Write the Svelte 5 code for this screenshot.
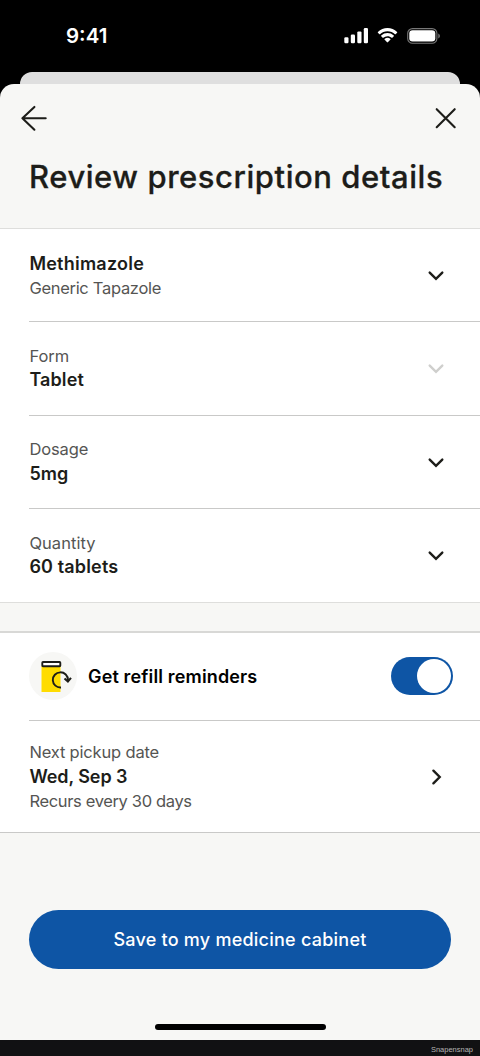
<script>
  const fields = [
    { top: 'Methimazole', bottom: 'Generic Tapazole', titleFirst: true, topSpacing: 0.23, bottomSpacing: -0.3 },
    { top: 'Form', bottom: 'Tablet', disabled: true, topSpacing: 0, bottomSpacing: 0.1 },
    { top: 'Dosage', bottom: '5mg', topSpacing: -0.1, bottomSpacing: 0.1 },
    { top: 'Quantity', bottom: '60 tablets', topSpacing: 0.05, bottomSpacing: 0.15 }
  ];
  let reminders = $state(true);
</script>

<div class="screen">
  <header class="status">
    <span class="time">9:41</span>
    <div class="signals">
      <svg width="25" height="16" viewBox="0 0 25 16" fill="#fff">
        <rect x="0.3" y="9.2" width="4.2" height="6" rx="1.2" />
        <rect x="6.8" y="6.6" width="4.2" height="8.6" rx="1.2" />
        <rect x="13.3" y="3.4" width="4.2" height="11.8" rx="1.2" />
        <rect x="19.8" y="0" width="4.2" height="15.2" rx="1.2" />
      </svg>
      <svg class="wifi" width="21" height="16" viewBox="0 0 21 16" fill="#fff">
        <path d="M10.5 3.2c2.9 0 5.5 1.1 7.5 3 .2.2.4.2.6 0l1.5-1.5c.2-.2.2-.5 0-.7C17.500 1.500 14.100.1 10.500.1S3.500 1.500.9 4c-.2.200-.2.500 0 .7l1.500 1.500c.2.200.4.200.6 0 2-1.900 4.600-3 7.500-3z" />
        <path d="M10.500 8.200c1.600 0 3.100.6 4.200 1.600.2.200.4.200.6 0l1.500-1.500c.2-.2.200-.5 0-.7a9.200 9.200 0 0 0-12.600 0c-.2.200-.2.500 0 .7l1.500 1.500c.2.200.4.200.6 0a6.200 6.200 0 0 1 4.200-1.600z" />
        <path d="M13.500 11.600c.2-.2.200-.5 0-.7a4.700 4.700 0 0 0-6 0c-.2.200-.2.500 0 .7l2.600 2.700c.2.200.5.200.7 0z" />
      </svg>
      <svg width="34" height="16" viewBox="0 0 34 16">
        <rect x="0.700" y="0.600" width="29.200" height="14.600" rx="4.800" fill="none" stroke="#777" stroke-width="1.100" />
        <rect x="2.300" y="2.200" width="26" height="11.400" rx="3.300" fill="#fff" />
        <path d="M31.300 5.400v5c1-.4 1.600-1.400 1.600-2.500s-.6-2.100-1.600-2.500z" fill="#777" />
      </svg>
    </div>
  </header>

  <div class="behind"></div>

  <main class="sheet">
    <nav>
      <button aria-label="Back">
        <svg width="28" height="28" viewBox="0 0 28 28" class="line"><path d="M25.700 14.300H2.400M14.400 2.900 2.400 14.300l12 11.400" /></svg>
      </button>
      <button aria-label="Close">
        <svg width="24" height="24" viewBox="0 0 24 24" class="line"><path d="M2.700 3.200l18 18M20.700 3.200l-18 18" /></svg>
      </button>
    </nav>
    <h1>Review prescription details</h1>

    <section class="fields">
      {#each fields as f}
        <div class="row">
          <div class="copy" class:first={f.titleFirst}>
            <span class={f.titleFirst ? 'strong' : 'muted'} style:letter-spacing="{f.topSpacing}px">{f.top}</span>
            <span class={f.titleFirst ? 'muted' : 'strong'} style:letter-spacing="{f.bottomSpacing}px">{f.bottom}</span>
          </div>
          <svg class="chevron" class:disabled={f.disabled} width="18" height="14" viewBox="0 0 18 14"><path d="M2.700 4.600 9 10.800l6.300-6.200" /></svg>
        </div>
      {/each}
    </section>

    <section class="reminders">
      <div class="row refill">
        <div class="badge">
          <svg width="48" height="48" viewBox="0 0 48 48">
            <path d="M12.500 14h19v26h-19z" fill="#ffdc00" />
            <rect x="13.300" y="10" width="18" height="4.300" rx="0.700" fill="#fff" stroke="#1d1d19" stroke-width="1.900" />
            <path d="M32 35.500A7.600 7.600 0 1 1 39 28" fill="none" stroke="#1d1d19" stroke-width="1.900" />
            <path d="M35.500 26.400l3.400 3.100 3.100-3.700" fill="none" stroke="#1d1d19" stroke-width="2" />
          </svg>
        </div>
        <span class="strong refill-label">Get refill reminders</span>
        <button class="toggle" class:on={reminders} role="switch" aria-checked={reminders} aria-label="Get refill reminders" onclick={() => (reminders = !reminders)}><i></i></button>
      </div>
      <div class="row pickup">
        <div class="copy">
          <span class="muted next">Next pickup date</span>
          <span class="strong date">Wed, Sep 3</span>
          <span class="muted recurs">Recurs every 30 days</span>
        </div>
        <svg class="chevron" width="18" height="18" viewBox="0 0 18 18"><path d="M6.400 2.700 12.700 9l-6.300 6.300" /></svg>
      </div>
    </section>

    <button class="save">Save to my medicine cabinet</button>
    <div class="home"></div>
  </main>
  <footer>Snapensnap</footer>
</div>

<style>
  :global(body) { margin: 0; background: #000; }
  .screen { width: 480px; height: 1056px; display: flex; flex-direction: column; background: #000; font-family: Inter, "Liberation Sans", sans-serif; color: #1d1d19; overflow: hidden; }
  button { border: 0; padding: 0; background: none; font: inherit; color: inherit; display: block; }
  svg { display: block; flex: none; }
  .status { height: 72px; flex: none; display: flex; justify-content: space-between; box-sizing: border-box; padding: 26px 39px 0 66px; color: #fff; }
  .time { font-size: 20.5px; line-height: 20px; font-weight: 600; letter-spacing: 0; }
  .signals { display: flex; padding-top: 2px; }
  .wifi { margin: 0 9px 0 8px; }
  .behind { height: 12px; flex: none; margin: 0 20px; background: #dfdfdf; border-radius: 12px 12px 0 0; }
  .sheet { height: 956px; flex: none; background: #f7f7f5; border-radius: 14px 14px 0 0; display: flex; flex-direction: column; }
  nav { display: flex; justify-content: space-between; align-items: center; height: 68px; padding: 0 22px 0 20px; }
  .line { fill: none; stroke: #1d1d19; stroke-width: 2.1; stroke-linecap: round; stroke-linejoin: round; }
  h1 { margin: 0; height: 76px; padding-left: 29px; font-size: 31px; line-height: 50px; font-weight: 500; -webkit-text-stroke: 0.3px #1d1d19; letter-spacing: 0.55px; white-space: nowrap; }
  .fields { background: #fff; border-top: 1px solid #dededc; border-bottom: 1px solid #dededc; height: 373px; display: grid; grid-template-rows: repeat(4, 1fr); }
  .row { margin-left: 29px; padding-right: 35px; display: flex; align-items: center; justify-content: space-between; border-bottom: 1px solid #c9c9c8; box-sizing: border-box; }
  .row:last-child { border-bottom: 0; }
  .copy { display: flex; flex-direction: column; line-height: 24.5px; white-space: nowrap; padding-left: 0.4px; }
  .first { padding-top: 2px; }
  .strong { font-size: 18px; font-weight: 600; }
  .muted { font-size: 16.500px; color: #555553; }
  .next { letter-spacing: -0.17px; }
  .date { letter-spacing: -0.08px; padding-top: 1px; margin-bottom: -1px; }
  .recurs { letter-spacing: -0.35px; }
  .chevron { fill: none; stroke: #1d1d19; stroke-width: 2.400; stroke-linecap: round; }
  .disabled { stroke: #cfcfcd; }
  .reminders { margin-top: 28px; background: #fff; border-top: 2px solid #d8d8d6; border-bottom: 1px solid #c9c9c8; height: 199px; display: flex; flex-direction: column; }
  .refill { height: 88px; flex: none; padding-right: 27px; padding-bottom: 1px; }
  .pickup { flex: 1; }
  .badge { width: 48px; height: 48px; border-radius: 50%; background: #f7f7f5; }
  .refill-label { flex: 1; margin-left: 11px; color: #000; letter-spacing: 0.15px; }
  .toggle { width: 62px; height: 38px; box-sizing: border-box; border-radius: 19px; padding: 2px; background: #999; display: flex; }
  .toggle.on { background: #0e55a5; justify-content: flex-end; }
  .toggle i { width: 34px; height: 34px; border-radius: 50%; background: #fff; }
  .save { margin: 77px 29px 0; height: 59px; border-radius: 30px; background: #0e55a5; color: #fff; font-size: 18px; font-weight: 500; flex: none; letter-spacing: 0.24px; }
  .home { width: 171px; height: 6px; border-radius: 3px; background: #000; margin: 55px auto 0; }
  footer { height: 16px; background: #111113; color: #b4b4b4; font: 7.5px/19px "Liberation Sans", sans-serif; text-align: right; padding-right: 7px; }
</style>
